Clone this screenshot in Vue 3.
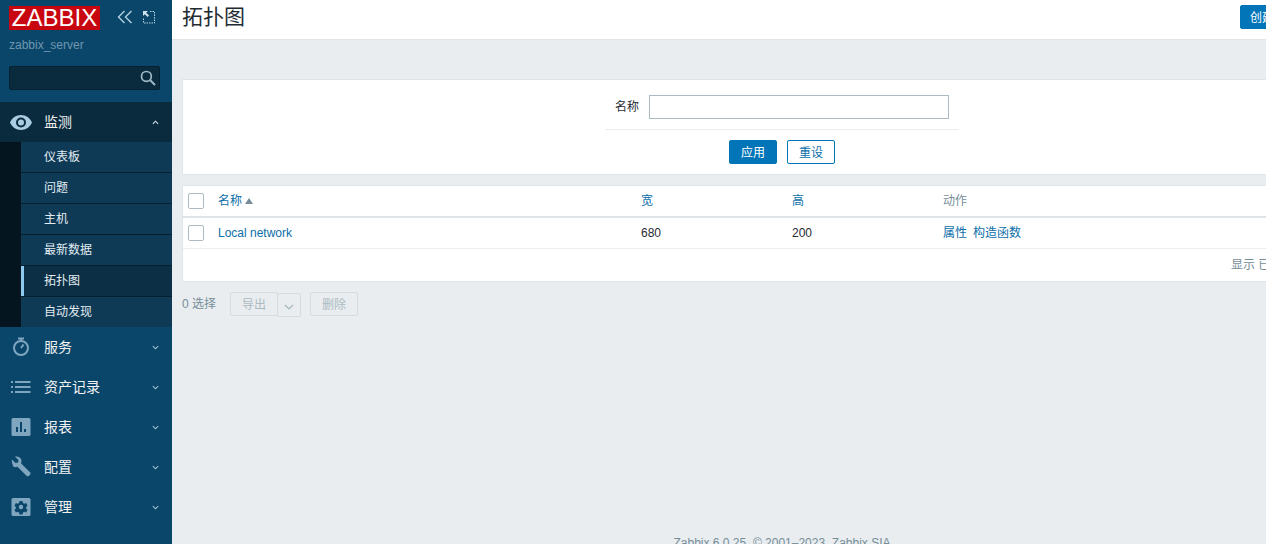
<script setup>
const subs = ['仪表板', '问题', '主机', '最新数据', '拓扑图', '自动发现']
const menus = [
  { label: '服务', icon: 'timer' },
  { label: '资产记录', icon: 'list' },
  { label: '报表', icon: 'chart' },
  { label: '配置', icon: 'wrench' },
  { label: '管理', icon: 'gear' }
]
</script>

<template>
  <div class="app">
    <aside class="side">
      <div class="brand">
        <span class="logo">ZABBIX</span>
        <svg class="ctl" width="16" height="14" viewBox="0 0 16 14" fill="none" stroke="#b5d0e0" stroke-width="1.4">
          <path d="M7.5 1 1.5 7l6 6M14.5 1l-6 6 6 6" />
        </svg>
        <svg class="ctl2" width="14" height="14" viewBox="0 0 14 14">
          <path d="M1 1h5L4.2 2.8 7 5.6 5.6 7 2.8 4.2 1 6z" fill="#cfe0ea" />
          <path d="M8 1.500h4.500V13H1.500V8" fill="none" stroke="#b5d0e0" stroke-dasharray="1.500 1" />
        </svg>
      </div>
      <div class="server">zabbix_server</div>
      <div class="search">
        <svg width="16" height="16" viewBox="0 0 16 16" fill="none" stroke="#9fb9c9" stroke-width="1.700">
          <circle cx="6.400" cy="6.400" r="4.900" /><path d="m10 10 5 5" stroke-width="2" />
        </svg>
      </div>
      <nav>
        <div class="menu open">
          <svg class="ic" width="24" height="24" viewBox="0 0 24 24">
            <path fill="#a9cce2" fill-rule="evenodd" d="M12 5C7 5 2.800 8 1 12.500 2.800 17 7 20 12 20s9.200-3 11-7.500C21.200 8 17 5 12 5zm0 12.500a5 5 0 1 1 0-10 5 5 0 0 1 0 10zm0-8a3 3 0 1 0 0 6 3 3 0 0 0 0-6z" />
          </svg>
          <span>监测</span>
          <svg class="chev" width="7" height="5" viewBox="0 0 8 5" fill="none" stroke="#dbe7ee" stroke-width="1.200"><path d="M1 4l3-3 3 3" /></svg>
        </div>
        <div class="subwrap">
          <div v-for="s in subs" :key="s" class="sub" :class="{ sel: s === '拓扑图' }">{{ s }}</div>
        </div>
        <div v-for="m in menus" :key="m.label" class="menu">
          <svg class="ic" width="24" height="24" viewBox="0 0 24 24">
            <g v-if="m.icon === 'timer'" fill="none" stroke="#7fa5bf" stroke-width="2">
              <circle cx="12" cy="13" r="7" /><path d="M9 3.500h6M12 4v2M12 13l2.500-3.500" />
            </g>
            <g v-else-if="m.icon === 'list'" fill="#7fa5bf">
              <path d="M2 6h2v2H2zM2 11h2v2H2zM2 16h2v2H2zM6 6h15.500v2H6zM6 11h15.500v2H6zM6 16h15.500v2H6z" />
            </g>
            <path v-else-if="m.icon === 'chart'" fill="#7fa5bf" fill-rule="evenodd" d="M4 3h16a1.500 1.500 0 0 1 1.500 1.500v15A1.500 1.500 0 0 1 20 21H4a1.500 1.500 0 0 1-1.500-1.500v-15A1.500 1.500 0 0 1 4 3zm3 9v5h2v-5zm4-5v10h2V7zm4 7v3h2v-3z" />
            <path v-else-if="m.icon === 'wrench'" fill="#7fa5bf" d="M3 4.500 6.500 8l2.500-.5.500-2.500L6 1.800c2.500-.8 5 .2 6 2.200.7 1.500.6 3 0 4.200l9 9c.7.700.7 1.800 0 2.500l-1 1c-.7.700-1.800.7-2.500 0l-9-9c-1.300.6-2.800.6-4.200-.1C3.200 8.600 2.300 6.500 3 4.500z" />
            <path v-else fill="#7fa5bf" fill-rule="evenodd" d="M4 3h16a1.500 1.500 0 0 1 1.500 1.500v15A1.500 1.500 0 0 1 20 21H4a1.500 1.500 0 0 1-1.500-1.500v-15A1.500 1.500 0 0 1 4 3zm6.500 3-.4 2a4.500 4.500 0 0 0-1.300.8l-1.900-.7-1.500 2.600 1.500 1.300a4.500 4.500 0 0 0 0 1.500l-1.500 1.300 1.500 2.600 1.900-.7c.4.300.8.600 1.300.8l.4 2h3l.4-2c.5-.2.900-.5 1.300-.8l1.900.7 1.500-2.600-1.500-1.300a4.500 4.500 0 0 0 0-1.500l1.500-1.300-1.500-2.600-1.900.7a4.500 4.500 0 0 0-1.300-.8l-.4-2zM12 9.800a2.200 2.200 0 1 1 0 4.400 2.200 2.200 0 0 1 0-4.400z" />
          </svg>
          <span>{{ m.label }}</span>
          <svg class="chev" width="7" height="5" viewBox="0 0 8 5" fill="none" stroke="#a9c3d3" stroke-width="1.200"><path d="M1 1l3 3 3-3" /></svg>
        </div>
      </nav>
    </aside>

    <main class="main">
      <header class="head">
        <h1>拓扑图</h1>
        <div class="head-btns">
          <button class="btn primary wide">创建拓扑图</button>
          <button class="btn primary imp">导入</button>
        </div>
      </header>

      <div class="content">
        <section class="filter">
          <div class="form">
            <div class="row">
              <label>名称</label>
              <div class="input"></div>
            </div>
            <div class="acts">
              <button class="btn primary">应用</button>
              <button class="btn outline">重设</button>
            </div>
          </div>
        </section>

        <section class="table">
          <div class="tr thead">
            <div class="c0"><span class="cb"></span></div>
            <div class="c1"><a>名称</a><i class="tri"></i></div>
            <div class="c2"><a>宽</a></div>
            <div class="c3"><a>高</a></div>
            <div class="c4 muted">动作</div>
          </div>
          <div class="tr tbody">
            <div class="c0"><span class="cb"></span></div>
            <div class="c1"><a>Local network</a></div>
            <div class="c2">680</div>
            <div class="c3">200</div>
            <div class="c4"><a>属性</a><a class="gap">构造函数</a></div>
          </div>
          <div class="paging">显示 已自动发现的 1中的1</div>
        </section>

        <div class="actions">
          <span class="count">0 选择</span>
          <button class="btn off">导出</button>
          <button class="btn off drop">
            <svg width="10" height="6" viewBox="0 0 10 6" fill="none" stroke="#a5b6be" stroke-width="1.200"><path d="M1 1l4 4 4-4" /></svg>
          </button>
          <button class="btn off del">删除</button>
        </div>
      </div>

      <footer class="foot">Zabbix 6.0.25. © 2001–2023, <u>Zabbix SIA</u></footer>
    </main>
  </div>
</template>

<style>
html, body { margin: 0; height: 100%; overflow: hidden; background: #e9edf0; }
</style>

<style scoped>
.app {
  display: flex;
  width: 1392px;
  height: 544px;
  overflow: hidden;
  font: 12px/14px "Liberation Sans", "Noto Sans CJK SC", sans-serif;
  color: #1f2c33;
}
.side { width: 172px; flex: none; background: #0a466a; color: #f2f2f2; }
.brand { display: flex; align-items: center; height: 24px; padding: 6px 0 0 9px; }
.logo {
  width: 91px; height: 24px; background: #c8060f; color: #fff;
  font-size: 24px; line-height: 24px; text-align: center;
}
.ctl { margin: -2px 0 0 17px; }
.ctl2 { margin: -2px 0 0 9px; }
.server { margin: 8px 0 0 9px; color: #6f97af; height: 14px; line-height: 14px; }
.search {
  display: flex; align-items: center; justify-content: flex-end;
  box-sizing: border-box; width: 151px; height: 24px; margin: 14px 0 0 9px; padding-right: 3px;
  background: #0a2b3d; border: 1px solid #052030; border-radius: 2px;
}
nav { margin-top: 12px; }
.menu { display: flex; align-items: center; height: 40px; padding-left: 9px; font-size: 14px; }
.menu.open { background: #0a2b3d; }
.ic { flex: none; }
.menu span { margin-left: 11px; flex: 1; }
.chev { margin-right: 13px; }
.subwrap { background: #04151f; padding-left: 21px; }
.sub {
  box-sizing: border-box; height: 31px; line-height: 30px; padding-left: 23px;
  background: #0f3a56; border-bottom: 1px solid #04202f; color: #e2edf3;
}
.sub:last-child { height: 30px; border-bottom: 0; }
.sub.sel { background: #0c2f45; box-shadow: inset 3px 0 0 #8cc8ef; }

.main { flex: 1; min-width: 0; display: flex; flex-direction: column; background: #e9edf0; }
.head {
  box-sizing: border-box; height: 40px; flex: none; display: flex; justify-content: space-between; align-items: flex-start;
  padding: 5px 10px 0; background: #fff; border-bottom: 1px solid #dfe4e7;
}
h1 { margin: -1px 0 0; font-size: 21px; line-height: 26px; font-weight: 400; color: #1f2c33; }
.head-btns { display: flex; gap: 10px; }
.btn {
  box-sizing: border-box; height: 24px; width: 48px; padding: 1px 0 0; border-radius: 2px;
  font: inherit; border: 1px solid #0275b8; cursor: pointer;
}
.primary { background: #0275b8; color: #fff; }
.wide { width: 80px; }
.imp { width: 52px; }
.outline { background: #fff; color: #0b6ea8; }
.off { background: #e9edf0; border-color: #d5dbde; color: #acbbc2; }
.content { padding: 39px 10px 0; flex: none; }
.filter {
  box-sizing: border-box; height: 96px; background: #fff;
  border: 1px solid #dfe4e7; padding-top: 15px;
}
.form { width: 354px; margin: 0 auto; }
.row { display: flex; align-items: center; justify-content: flex-end; padding: 0 10px 10px; box-sizing: border-box; border-bottom: 1px solid #ebeef0; height: 35px; }
.row label { margin-right: 10px; }
.input { box-sizing: border-box; width: 300px; height: 24px; border: 1px solid #acbbc2; background: #fff; }
.acts { display: flex; justify-content: center; gap: 10px; margin-top: 10px; }
.table {
  box-sizing: border-box; height: 97px; margin-top: 10px; background: #fff;
  border: 1px solid #dfe4e7;
}
.tr { display: flex; align-items: center; box-sizing: border-box; }
.thead { height: 32px; border-bottom: 2px solid #dfe4e7; }
.tbody { height: 31px; border-bottom: 1px solid #ebeef0; }
.c0 { width: 35px; padding-left: 5px; box-sizing: border-box; display: flex; }
.c1 { width: 423px; display: flex; align-items: center; }
.c2 { width: 151px; }
.c3 { width: 151px; }
.cb { box-sizing: border-box; width: 16px; height: 16px; border: 1px solid #acbbc2; border-radius: 2px; background: #fff; }
a { color: #0b6ea8; }
.muted { color: #768d99; }
.tri {
  width: 0; height: 0; margin-left: 3px;
  border: 4px solid transparent; border-top: 0; border-bottom: 6px solid #768d99;
}
.gap { margin-left: 6px; }
.paging { height: 32px; line-height: 32px; text-align: right; padding-right: 10px; color: #768d99; }
.actions { display: flex; align-items: flex-start; margin-top: 10px; color: #768d99; }
.count { width: 48px; line-height: 24px; }
.drop { width: 24px; margin: 1px 0 0 -1px; }
.del { margin-left: 9px; }
.foot {
  margin-top: 219px; text-align: center; color: #768d99; height: 14px; line-height: 14px; flex: none; font-size: 12px;
}
.foot u { text-decoration: none; }
</style>
